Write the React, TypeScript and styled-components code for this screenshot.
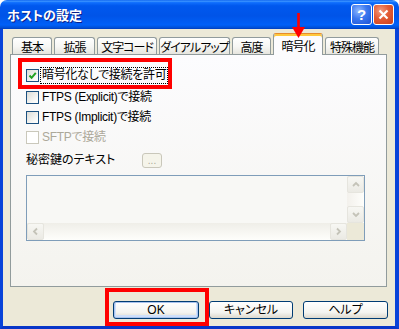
import styled, { createGlobalStyle } from "styled-components";

const GlobalStyle = createGlobalStyle`
    html, body {
        margin:0;
        padding:0;
        width:399px;
        height:329px;
        overflow:hidden;
        background:#ffffff;
    }
    body {
        font-family: "Liberation Sans", "Noto Sans CJK JP", sans-serif;
        font-size:12px;
        font-feature-settings: "palt";
    }
`;

const Window = styled.div`
    width:399px;
    height:329px;
    display:flex;
    flex-direction:column;
`;

const TitleBar = styled.div`
    height:29px;
    flex-shrink:0;
    border-radius:7px 7px 0 0;
    background:linear-gradient(to bottom, #0a5fee 0%, #3d95ff 4%, #0f6efd 9%, #0058ee 20%, #0054e8 55%, #0060f8 86%, #0050d8 95%, #003dbe 100%);
    display:flex;
    align-items:center;
    padding:0 5px 0 7px;
    box-sizing:border-box;
`;

const Title = styled.div`
    flex:1;
    color:#ffffff;
    font-size:13px;
    font-weight:bold;
    text-shadow:1px 1px 0 #0a1e8a;
`;

const CaptionButtons = styled.div`
    display:flex;
    gap:1px;
`;

const CaptionButton = styled.div<{ $close?: boolean }>`
    width:21px;
    height:21px;
    box-sizing:border-box;
    border:1px solid #ffffff;
    border-radius:3px;
    display:flex;
    align-items:center;
    justify-content:center;
    color:#ffffff;
    font-family:"Liberation Sans", sans-serif;
    font-weight:bold;
    font-size:15px;
    background:${p => p.$close
        ? "radial-gradient(circle at 35% 30%, #f39a7e 0%, #e35b35 45%, #c9401c 100%)"
        : "radial-gradient(circle at 35% 30%, #8fb8ff 0%, #3b78ef 45%, #1c52d6 100%)"};
`;

const Frame = styled.div`
    flex:1;
    display:flex;
    flex-direction:column;
    background:#ece9d8;
    border-left:3px solid #0843d9;
    border-right:4px solid #0843d9;
    border-bottom:3px solid #0836c8;
    padding-bottom:7px;
    min-height:0;
`;

const TabStrip = styled.div`
    height:25px;
    flex-shrink:0;
    display:flex;
    align-items:flex-end;
    gap:2px;
    padding-left:9px;
`;

const Tab = styled.div<{ $active?: boolean; $w: number }>`
    position:relative;
    width:${p => p.$w}px;
    height:${p => (p.$active ? 22 : 17)}px;
    margin-bottom:${p => (p.$active ? -1 : 0)}px;
    z-index:${p => (p.$active ? 2 : 1)};
    box-sizing:border-box;
    border:1px solid #919b9c;
    border-bottom:none;
    border-top-color:${p => (p.$active ? "#e68b2c" : "#919b9c")};
    border-radius:3px 3px 0 0;
    background:${p => (p.$active ? "#fcfcfe" : "linear-gradient(#ffffff, #f6f6f3 55%, #e6e5de)")};
    box-shadow:${p => (p.$active ? "inset 0 2px 0 #ffc83c" : "none")};
    display:flex;
    align-items:center;
    justify-content:center;
    padding-top:${p => (p.$active ? 2 : 0)}px;
    font-size:12px;
    letter-spacing:-1px;
    color:#000000;
    white-space:nowrap;
`;

const Arrow = styled.svg`
    position:absolute;
    left:50%;
    top:-21px;
    margin-left:-6px;
    z-index:3;
`;

const Panel = styled.div`
    flex:1;
    margin:0 8px 0 7px;
    border:1px solid #919b9c;
    background:linear-gradient(#fcfcfe, #f4f3ee);
    padding:10px 0 0 15px;
    display:flex;
    flex-direction:column;
    min-height:0;
`;

const Row = styled.div<{ $gap?: number }>`
    position:relative;
    height:20px;
    display:flex;
    align-items:center;
    gap:1px;
    align-self:flex-start;
    margin-top:${p => p.$gap ?? 0}px;
`;

const Highlight = styled.div<{ $t: number; $r: number; $b: number; $l: number }>`
    position:relative;
    display:inline-flex;
    &::after{
        content:"";
        position:absolute;
        top:${p => -p.$t}px;
        right:${p => -p.$r}px;
        bottom:${p => -p.$b}px;
        left:${p => -p.$l}px;
        border:4px solid #ff0000;
        pointer-events:none;
        z-index:5;
    }
`;

const Box = styled.span<{ $disabled?: boolean }>`
    width:13px;
    height:13px;
    flex-shrink:0;
    box-sizing:border-box;
    border:1px solid ${p => (p.$disabled ? "#cac8bb" : "#1c5180")};
    background:${p => (p.$disabled ? "#ffffff" : "linear-gradient(135deg, #dcdcd7, #fbfbf9 80%)")};
    display:flex;
    align-items:center;
    justify-content:center;
`;

const Label = styled.span<{ $disabled?: boolean; $focus?: boolean }>`
    color:${p => (p.$disabled ? "#aca899" : "#000000")};
    border:1px ${p => (p.$focus ? "dotted #000000" : "solid transparent")};
    padding:0 1px;
    line-height:15px;
    letter-spacing:-0.3px;
    white-space:nowrap;
`;

const KeyRow = styled.div`
    height:22px;
    margin-top:2px;
    display:flex;
    align-items:center;
`;

const KeyLabel = styled.span`
    width:116px;
    white-space:nowrap;
    margin-top:-4px;
`;

const SmallButton = styled.div`
    width:20px;
    height:15px;
    box-sizing:border-box;
    border:1px solid #c9c7ba;
    border-radius:3px;
    background:#f5f4ea;
    color:#aca899;
    font-size:10px;
    display:flex;
    align-items:flex-end;
    justify-content:center;
    line-height:12px;
`;

const TextBox = styled.div`
    margin-top:4px;
    width:339px;
    height:66px;
    box-sizing:border-box;
    border:1px solid #7f9db9;
    background:#f8f8f5;
    display:grid;
    grid-template-columns:1fr 17px;
    grid-template-rows:1fr 17px;
`;

const VScroll = styled.div`
    grid-column:2;
    grid-row:1;
    display:flex;
    flex-direction:column;
    justify-content:space-between;
    background:linear-gradient(to right, #f3f1ec, #fefefb);
`;

const HScroll = styled.div`
    grid-column:1;
    grid-row:2;
    display:flex;
    justify-content:space-between;
    background:linear-gradient(#efeee8, #fefefb);
`;

const Corner = styled.div`
    grid-column:2;
    grid-row:2;
    background:#ece9d8;
`;

const ScrollBtn = styled.div`
    width:17px;
    height:17px;
    box-sizing:border-box;
    border:1px solid #e6e5de;
    border-radius:2px;
    background:linear-gradient(#f7f7f3, #ebeae4);
    display:flex;
    align-items:center;
    justify-content:center;
`;

const ButtonRow = styled.div`
    margin-top:14px;
    padding-right:7px;
    display:flex;
    justify-content:flex-end;
    gap:10px;
`;

const Button = styled.button<{ $default?: boolean; $w: number }>`
    width:${p => p.$w}px;
    height:18px;
    padding:0;
    box-sizing:border-box;
    border:1px solid #003c74;
    border-radius:3px;
    background:linear-gradient(#ffffff, #f4f4f0 65%, #dcd8cd);
    box-shadow:${p => (p.$default ? "inset 0 0 0 1px #a9c3ee, inset 0 -1px 0 2px #cfe0fa" : "none")};
    font-family:"Liberation Sans", "Noto Sans CJK JP", sans-serif;
    font-feature-settings:"palt";
    font-size:12px;
    color:#000000;
    line-height:14px;
`;

const Chevron = ({ dir }: { dir: "up" | "down" | "left" | "right" }) => {
    const d = {
        up: "M2 6 L5 3 L8 6",
        down: "M2 3 L5 6 L8 3",
        left: "M6 1.5 L3 4.5 L6 7.5",
        right: "M3 1.5 L6 4.5 L3 7.5",
    }[dir];
    return (
        <svg width="9" height="9" viewBox="0 0 9 9">
            <path d={d} fill="none" stroke="#c4c3b8" strokeWidth="1.8" />
        </svg>
    );
};

const Check = () => (
    <svg width="9" height="9" viewBox="0 0 9 9">
        <path d="M1.5 4.5 L3.6 6.8 L7.8 1.8" fill="none" stroke="#21a121" strokeWidth="2" />
    </svg>
);

const tabs: { label: string; w: number; active?: boolean }[] = [
    { label: "基本", w: 40 },
    { label: "拡張", w: 41 },
    { label: "文字コード", w: 60 },
    { label: "ダイアルアップ", w: 71 },
    { label: "高度", w: 39 },
    { label: "暗号化", w: 50, active: true },
    { label: "特殊機能", w: 54 },
];

export default function App() {
    return (
        <>
            <GlobalStyle />
            <Window>
                <TitleBar>
                    <Title>ホストの設定</Title>
                    <CaptionButtons>
                        <CaptionButton>?</CaptionButton>
                        <CaptionButton $close>
                            <svg width="11" height="11" viewBox="0 0 11 11">
                                <path d="M1.5 1.5 L9.5 9.5 M9.5 1.5 L1.5 9.5" stroke="#ffffff" strokeWidth="2.2" />
                            </svg>
                        </CaptionButton>
                    </CaptionButtons>
                </TitleBar>
                <Frame>
                    <TabStrip>
                        {tabs.map(t => (
                            <Tab key={t.label} $w={t.w} $active={t.active}>
                                {t.active && (
                                    <Arrow width="13" height="25" viewBox="0 0 13 25">
                                        <rect x="5.2" y="0" width="2.6" height="16" fill="#ff0000" />
                                        <polygon points="0,14 13,14 6.5,25" fill="#ff0000" />
                                    </Arrow>
                                )}
                                {t.label}
                            </Tab>
                        ))}
                    </TabStrip>
                    <Panel>
                        <Row>
                            <Highlight $t={7} $r={4} $b={4} $l={8}>
                                <Row>
                                    <Box><Check /></Box>
                                    <Label $focus>暗号化なしで接続を許可</Label>
                                </Row>
                            </Highlight>
                        </Row>
                        <Row $gap={2}>
                            <Box />
                            <Label>FTPS (Explicit)で接続</Label>
                        </Row>
                        <Row>
                            <Box />
                            <Label>FTPS (Implicit)で接続</Label>
                        </Row>
                        <Row>
                            <Box $disabled />
                            <Label $disabled>SFTPで接続</Label>
                        </Row>
                        <KeyRow>
                            <KeyLabel>秘密鍵のテキスト</KeyLabel>
                            <SmallButton>...</SmallButton>
                        </KeyRow>
                        <TextBox>
                            <VScroll>
                                <ScrollBtn><Chevron dir="up" /></ScrollBtn>
                                <ScrollBtn><Chevron dir="down" /></ScrollBtn>
                            </VScroll>
                            <HScroll>
                                <ScrollBtn><Chevron dir="left" /></ScrollBtn>
                                <ScrollBtn><Chevron dir="right" /></ScrollBtn>
                            </HScroll>
                            <Corner />
                        </TextBox>
                    </Panel>
                    <ButtonRow>
                        <Highlight $t={13} $r={10} $b={7} $l={8}>
                            <Button $w={86} $default>OK</Button>
                        </Highlight>
                        <Button $w={84}>キャンセル</Button>
                        <Button $w={85}>ヘルプ</Button>
                    </ButtonRow>
                </Frame>
            </Window>
        </>
    );
}
